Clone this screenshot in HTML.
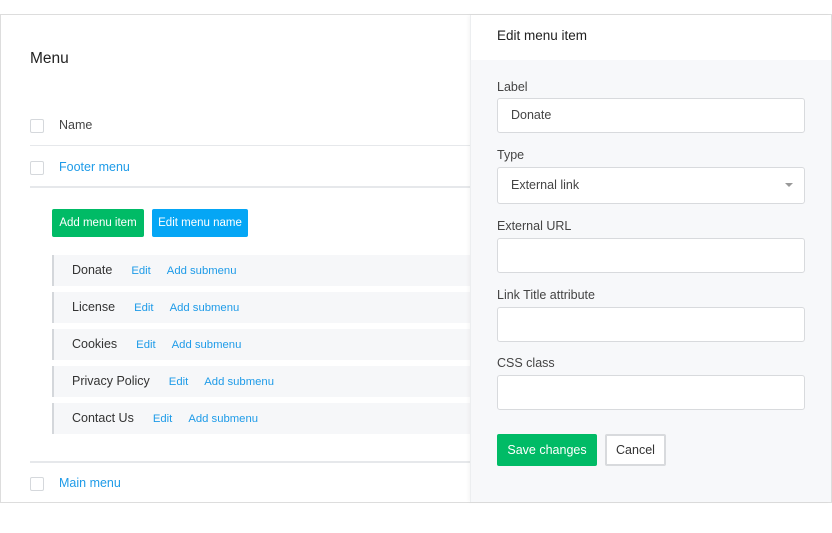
<!DOCTYPE html>
<html><head><style>
*{box-sizing:border-box;margin:0;padding:0}
body{width:832px;height:533px;background:#fff;font-family:"Liberation Sans",sans-serif;position:relative;overflow:hidden;color:#333}
.a{position:absolute}
.frame{left:0;top:14px;width:832px;height:489px;border:1px solid #ddd}
.cb{width:14px;height:14px;border:1px solid #d5d8dc;border-radius:2px;background:#fff}
.line{height:2px;background:#e6e8eb}
.link{color:#1e9be8}
.row{left:52px;width:418px;height:31px;background:#f6f7f9;border-left:2px solid #d4d7db;font-size:12.5px;line-height:31px;padding-left:18px}
.row span{margin-right:19px}
.row a{color:#1e9be8;text-decoration:none;font-size:11.3px;margin-right:16px}
.lbl{left:497px;font-size:12.5px;color:#444}
.inp{left:497px;width:308px;height:35px;background:#fff;border:1px solid #d8dadd;border-radius:3px;font-size:12.5px;line-height:33px;padding-left:13px;color:#444}
</style></head><body>
<div class="a frame"></div>
<div class="a" style="left:30px;top:50px;font-size:15.5px;color:#222">Menu</div>
<div class="a cb" style="left:30px;top:119px"></div>
<div class="a" style="left:59px;top:118px;font-size:12.5px;color:#444">Name</div>
<div class="a line" style="left:30px;top:145px;width:440px;height:1px"></div>
<div class="a cb" style="left:30px;top:161px"></div>
<div class="a link" style="left:59px;top:160px;font-size:12.5px">Footer menu</div>
<div class="a line" style="left:30px;top:186px;width:440px"></div>
<div class="a" style="left:52px;top:209px;width:92px;height:28px;background:#00bb66;border-radius:2px;color:#fff;font-size:11.5px;line-height:28px;text-align:center">Add menu item</div>
<div class="a" style="left:152px;top:209px;width:96px;height:28px;background:#05a6f5;border-radius:2px;color:#fff;font-size:11.5px;line-height:28px;text-align:center">Edit menu name</div>
<div class="a row" style="top:255px"><span>Donate</span><a>Edit</a><a>Add submenu</a></div>
<div class="a row" style="top:292px"><span>License</span><a>Edit</a><a>Add submenu</a></div>
<div class="a row" style="top:329px"><span>Cookies</span><a>Edit</a><a>Add submenu</a></div>
<div class="a row" style="top:366px"><span>Privacy Policy</span><a>Edit</a><a>Add submenu</a></div>
<div class="a row" style="top:403px"><span>Contact Us</span><a>Edit</a><a>Add submenu</a></div>
<div class="a line" style="left:30px;top:461px;width:440px"></div>
<div class="a cb" style="left:30px;top:477px"></div>
<div class="a link" style="left:59px;top:476px;font-size:12.5px">Main menu</div>
<div class="a" style="left:470px;top:15px;width:361px;height:487px;background:#f7f8fa;border-left:1px solid #eceef0;box-shadow:-2px 0 3px rgba(0,0,0,0.03)"></div>
<div class="a" style="left:471px;top:15px;width:360px;height:45px;background:#fff"></div>
<div class="a" style="left:497px;top:28px;font-size:13.5px;color:#222">Edit menu item</div>
<div class="a lbl" style="top:80px">Label</div>
<div class="a inp" style="top:98px">Donate</div>
<div class="a lbl" style="top:148px">Type</div>
<div class="a inp" style="top:167px;height:37px;line-height:35px">External link</div>
<div class="a" style="left:785px;top:183px;width:0;height:0;border-left:4px solid transparent;border-right:4px solid transparent;border-top:4px solid #999"></div>
<div class="a lbl" style="top:219px">External URL</div>
<div class="a inp" style="top:238px"></div>
<div class="a lbl" style="top:288px">Link Title attribute</div>
<div class="a inp" style="top:307px"></div>
<div class="a lbl" style="top:356px">CSS class</div>
<div class="a inp" style="top:375px"></div>
<div class="a" style="left:497px;top:434px;width:100px;height:32px;background:#00bb66;border-radius:2px;color:#fff;font-size:12.5px;line-height:32px;text-align:center">Save changes</div>
<div class="a" style="left:605px;top:434px;width:61px;height:32px;background:#fff;border:2px solid #d8dadd;border-radius:2px;color:#333;font-size:12.5px;line-height:28px;text-align:center">Cancel</div>
</body></html>
